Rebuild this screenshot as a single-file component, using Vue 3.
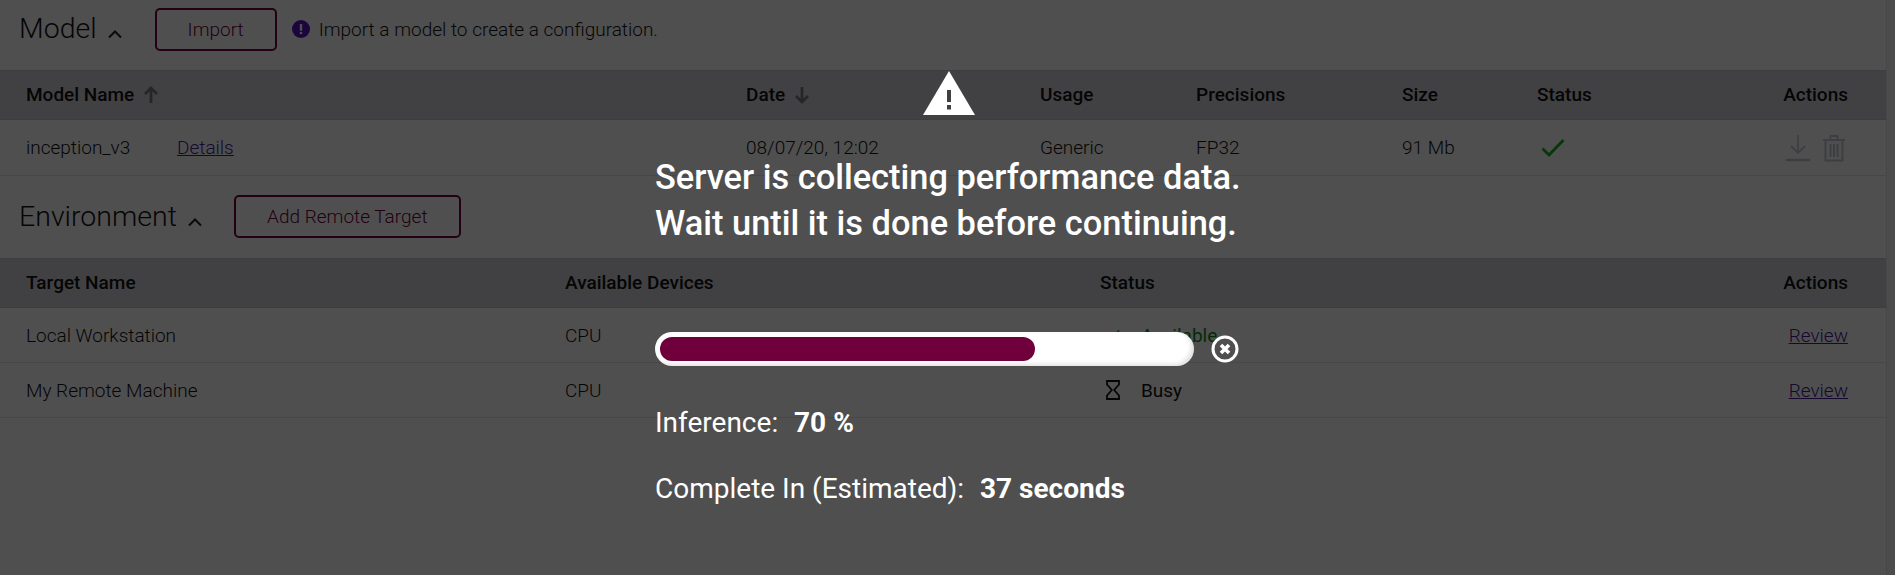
<script setup>
const modelHeads = [
  { label: 'Model Name', arrow: 'up' },
  { label: 'Date', arrow: 'down' },
  { label: 'Usage' },
  { label: 'Precisions' },
  { label: 'Size' },
  { label: 'Status' },
  { label: 'Actions' },
]
const targets = [
  { name: 'Local Workstation', device: 'CPU', status: 'Available' },
  { name: 'My Remote Machine', device: 'CPU', status: 'Busy' },
]
</script>

<template>
  <div class="page">
    <main class="content">
      <section class="title-row model-title">
        <h2 class="title">Model</h2>
        <svg class="chev" viewBox="0 0 18 12" width="18" height="12"><path d="M3 10.500 9 4.500l6 6" fill="none" stroke="currentColor" stroke-width="2"/></svg>
        <button class="btn import">Import</button>
        <svg class="info" viewBox="0 0 20 20" width="18" height="18"><circle cx="10" cy="10" r="10" fill="#5a13c4"/><rect x="8.700" y="4.500" width="2.600" height="7.500" fill="#fff"/><rect x="8.700" y="13.300" width="2.600" height="2.400" fill="#fff"/></svg>
        <span class="hint">Import a model to create a configuration.</span>
      </section>

      <div class="row head model-grid">
        <div v-for="(h, i) in modelHeads" :key="h.label" class="cell" :class="{ end: i === 6 }">
          {{ h.label }}
          <svg v-if="h.arrow === 'up'" class="sort" viewBox="0 0 16 18" width="16" height="18"><path d="M8 17V2M2 8l6-6 6 6" fill="none" stroke="#777b80" stroke-width="2.800"/></svg>
          <svg v-if="h.arrow === 'down'" class="sort" viewBox="0 0 16 18" width="16" height="18"><path d="M8 1v15M2 10l6 6 6-6" fill="none" stroke="#777b80" stroke-width="2.800"/></svg>
        </div>
      </div>
      <div class="row body model-grid">
        <div class="cell"><span class="mname">inception_v3</span><a class="link">Details</a></div>
        <div class="cell">08/07/20, 12:02</div>
        <div class="cell">Generic</div>
        <div class="cell">FP32</div>
        <div class="cell">91 Mb</div>
        <div class="cell">
          <svg class="check" viewBox="0 0 24 20" width="24" height="20"><path d="M1.500 10.500 8 17 22.500 2" fill="none" stroke="#14b01e" stroke-width="2.800"/></svg>
        </div>
        <div class="cell end actions">
          <svg viewBox="0 0 24 28" width="24" height="28"><path d="M12 1v18M5 12l7 7 7-7" fill="none" stroke="#c5c9d6" stroke-width="1.800"/><path d="M0 26h24" stroke="#c5c9d6" stroke-width="2.600"/></svg>
          <svg viewBox="0 0 22 28" width="22" height="28"><g fill="none" stroke="#c5c9d6" stroke-width="2"><path d="M0 6h22M7.500 5V2h7v3M2.500 6v20.500h17V6"/><path d="M7.500 10v13M11 10v13M14.500 10v13"/></g></svg>
        </div>
      </div>

      <section class="title-row env-title">
        <h2 class="title env-name">Environment</h2>
        <svg class="chev" viewBox="0 0 18 12" width="18" height="12"><path d="M3 10.500 9 4.500l6 6" fill="none" stroke="currentColor" stroke-width="2"/></svg>
        <button class="btn add">Add Remote Target</button>
      </section>

      <div class="row head env-grid">
        <div class="cell">Target Name</div>
        <div class="cell">Available Devices</div>
        <div class="cell">Status</div>
        <div class="cell end">Actions</div>
      </div>
      <div v-for="t in targets" :key="t.name" class="row body env-body env-grid">
        <div class="cell">{{ t.name }}</div>
        <div class="cell">{{ t.device }}</div>
        <div class="cell status">
          <span class="status-icon">
            <svg v-if="t.status === 'Available'" viewBox="0 0 24 20" width="16" height="14"><path d="M1.500 10.500 8 17 22.500 2" fill="none" stroke="#14b01e" stroke-width="2.500"/></svg>
            <svg v-else viewBox="0 0 14 20" width="14" height="20"><path d="M1 1h12v3.500L8.200 10l4.800 5.500V19H1v-3.500L5.800 10 1 4.500z" fill="none" stroke="#111" stroke-width="1.800"/></svg>
          </span>
          <span :class="t.status === 'Available' ? 'ok' : 'busy'">{{ t.status }}</span>
        </div>
        <div class="cell end"><a class="link">Review</a></div>
      </div>
    </main>
    <div class="scrollbar"></div>

    <div class="overlay">
      <div class="modal">
        <svg class="warn" viewBox="0 0 52 44" width="52" height="44"><path d="M26 0 52 44H0z" fill="#fff"/><rect x="24" y="19" width="4" height="12" fill="#3f4043"/><rect x="24" y="34" width="4" height="4.500" fill="#3f4043"/></svg>
        <p class="heading">Server is collecting performance data.<br />Wait until it is done before continuing.</p>
        <div class="progress-line">
          <div class="track"><div class="fill" style="width: 70.8%"></div></div>
          <svg viewBox="0 0 28 28" width="28" height="28"><circle cx="14" cy="14" r="12" fill="none" stroke="#fff" stroke-width="3"/><path d="M10 10l8 8M18 10l-8 8" stroke="#fff" stroke-width="3.600"/></svg>
        </div>
        <p class="stat stat-a">Inference:&nbsp; <b>70 %</b></p>
        <p class="stat stat-b">Complete In (Estimated):&nbsp; <b>37 seconds</b></p>
      </div>
    </div>
  </div>
</template>

<style>
html, body { margin: 0; height: 100%; overflow: hidden; background: #fff; }
</style>

<style scoped>
.page {
  position: relative;
  width: 1895px;
  height: 575px;
  overflow: hidden;
  background: #fff;
  font-family: Roboto, "Liberation Sans", sans-serif;
  font-size: 19px;
  color: #111;
}
.content { width: 1886px; }
.scrollbar {
  position: absolute;
  top: 0;
  right: 0;
  bottom: 0;
  width: 9px;
  background: #f5f5f5;
  border-left: 1px solid #e4e4e4;
  box-sizing: border-box;
}
.title-row { display: flex; align-items: center; padding-left: 19px; box-sizing: border-box; }
.model-title { height: 70px; padding-bottom: 12px; }
.env-title { height: 82px; padding-bottom: 1px; }
.title { margin: 0; font-size: 28.5px; font-weight: 300; color: #111; line-height: 1; }
.env-name { margin-top: 2px; }
.chev { margin: 8px 0 0 9px; color: #222; }
.btn {
  box-sizing: border-box;
  height: 43px;
  border: 2px solid #70003b;
  border-radius: 5px;
  background: #fff;
  color: #70003b;
  font: 300 19px Roboto, sans-serif;
}
.import { width: 122px; margin-left: 31px; }
.add { width: 227px; margin-left: 30px; }
.info { margin-left: 15px; }
.hint { margin-left: 9px; font-weight: 300; }
.row { display: grid; align-items: center; padding: 0 38px 0 26px; box-sizing: border-box; }
.model-grid { grid-template-columns: 720px 294px 156px 206px 135px 1fr 160px; }
.env-grid { grid-template-columns: 539px 535px 1fr 160px; }
.head {
  height: 50px;
  padding-bottom: 1px;
  background: #d0d3d8;
  border-top: 1px solid #c4c7cc;
  border-bottom: 1px solid #c4c7cc;
  font-weight: 500;
  color: #111;
}
.body {
  height: 56px;
  border-bottom: 1px solid #e6e6e6;
  font-weight: 300;
}
.env-body { height: 55px; }
.cell { display: flex; align-items: center; white-space: nowrap; }
.end { justify-content: flex-end; }
.sort { margin-left: 9px; }
.mname { width: 151px; }
.link { color: #4b1a9e; text-decoration: underline; font-weight: 300; }
.check { margin-left: 4px; }
.actions { gap: 13px; padding-right: 3px; }
.status-icon { display: flex; justify-content: center; align-items: center; width: 14px; margin: 0 21px 0 6px; }
.ok { color: #0d8a1a; font-weight: 400; }
.busy { font-weight: 400; }
.overlay {
  position: absolute;
  inset: 0;
  background: rgba(0, 0, 0, 0.69);
}
.modal {
  position: absolute;
  left: 655px;
  top: 71px;
  width: 620px;
  color: #fff;
}
.warn { display: block; margin-left: 268px; }
.heading { margin: 39px 0 0; font-size: 34.4px; font-weight: 500; line-height: 46px; white-space: nowrap; }
.progress-line { display: flex; align-items: center; gap: 17px; margin-top: 86px; }
.track {
  box-sizing: border-box;
  width: 539px;
  height: 34px;
  padding: 5px;
  border-radius: 17px;
  background: #fff;
  box-shadow: inset -3px -2px 4px rgba(0, 0, 0, 0.12);
}
.fill { height: 24px; border-radius: 12px; background: #70003b; }
.stat { margin: 0; font-size: 28px; line-height: 32px; white-space: nowrap; }
.stat b { font-weight: 700; margin-left: 2px; }
.stat-a { margin-top: 41px; }
.stat-b { margin-top: 34px; }
</style>
